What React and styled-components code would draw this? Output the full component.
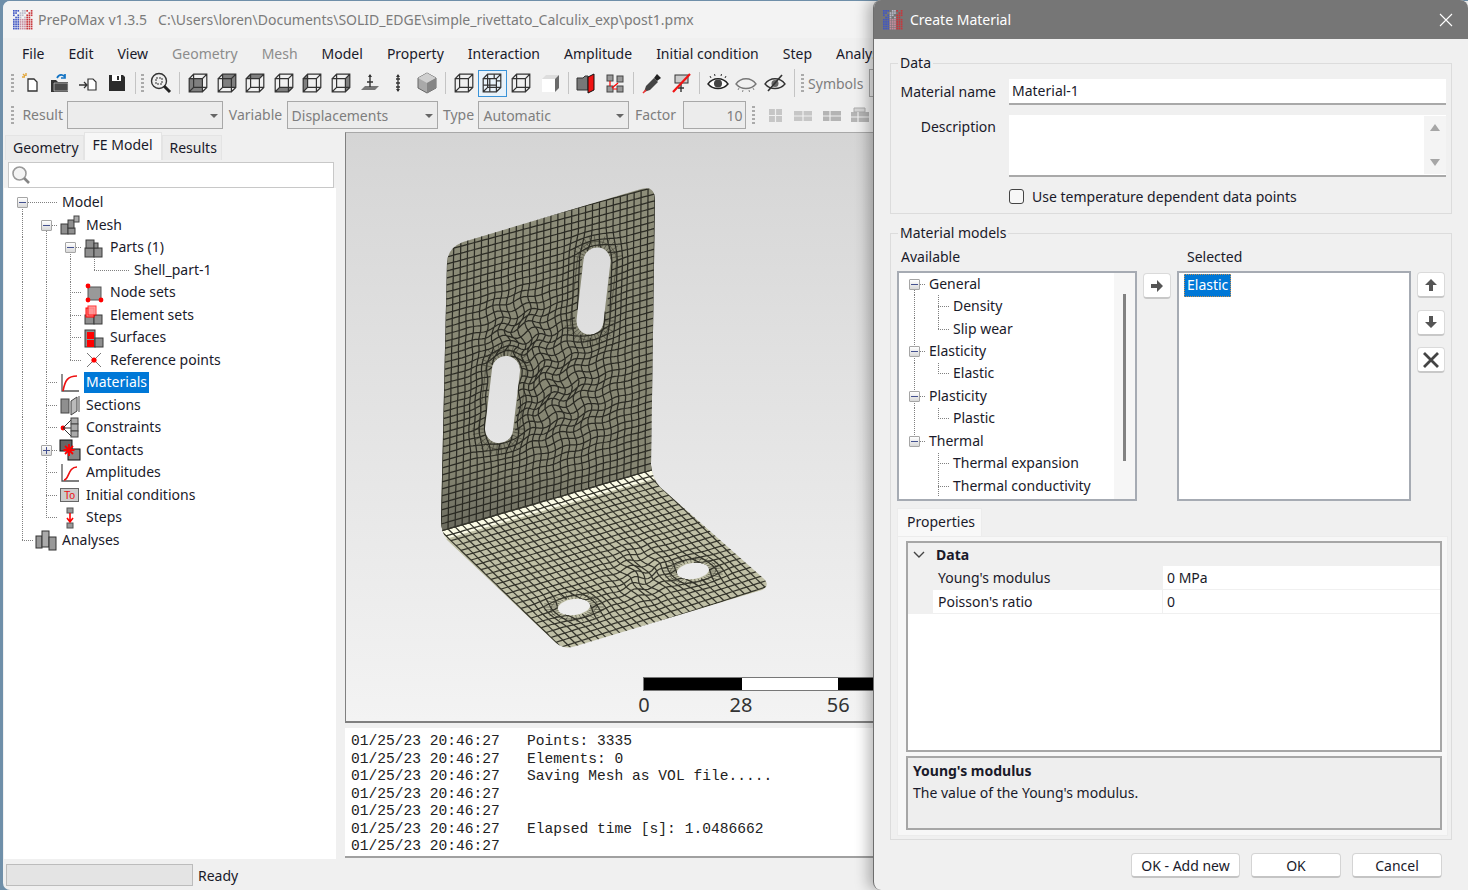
import React from "react";
import styled, { createGlobalStyle } from "styled-components";

const UI_FONT = `"Noto Sans", "Open Sans", sans-serif`;

const GlobalStyle = createGlobalStyle`
  html, body {
    margin: 0;
    padding: 0;
    width: 1468px;
    height: 890px;
    overflow: hidden;
    background: #6f8fa9;
  }
  * { box-sizing: border-box; }
  #root { width: 1468px; height: 890px; }
`;

/* ---------- mesh drawing ---------- */

const HOLES = [
  { a: [597, 261], b: [590, 321], r: 13.5, sy: 1, R: 2.6 },
  { a: [506, 370], b: [499, 429], r: 14, sy: 1, R: 2.6 },
  { a: [574, 607], b: [574, 607], r: 16, sy: 2, R: 2.6 },
  { a: [693, 571], b: [693, 571], r: 16, sy: 2, R: 2.6 },
];

const pushOut = (x, y, h) => {
  const ax = h.a[0], ay = h.a[1], bx = h.b[0], by = h.b[1];
  const dx = bx - ax, dy = by - ay;
  const len = dx * dx + dy * dy;
  const t = len ? Math.max(0, Math.min(1, ((x - ax) * dx + (y - ay) * dy) / len)) : 0;
  const qx = ax + t * dx, qy = ay + t * dy;
  const vx = x - qx, vy = (y - qy) * h.sy;
  const d = Math.hypot(vx, vy) / h.r;
  if (d >= h.R) return [x, y];
  if (d < 0.5) return null;
  const nd = 1 + ((h.R - 1) * (d - 0.5)) / (h.R - 0.5);
  const s = nd / d;
  return [qx + vx * s, qy + (vy * s) / h.sy];
};

const warp = (x, y) => {
  const w1 = Math.exp(-((x - 555) ** 2 + (y - 395) ** 2) / 3200);
  const w2 = Math.exp(-((x - 640) ** 2 + (y - 575) ** 2) / 700);
  const w3 = Math.exp(-((x - 520) ** 2 + (y - 330) ** 2) / 1200);
  const w = w1 + w2 + w3;
  let p = [x + w * 3.4 * Math.sin(y * 0.21 + x * 0.07), y + w * 3.4 * Math.cos(x * 0.19 - y * 0.05)];
  for (const h of HOLES) {
    p = pushOut(p[0], p[1], h);
    if (!p) return null;
  }
  return p;
};

const onQuad = (q, u, v) => {
  const tx = q[0][0] + (q[1][0] - q[0][0]) * u;
  const ty = q[0][1] + (q[1][1] - q[0][1]) * u;
  const bx = q[3][0] + (q[2][0] - q[3][0]) * u;
  const by = q[3][1] + (q[2][1] - q[3][1]) * u;
  return [tx + (bx - tx) * v, ty + (by - ty) * v];
};

const gridPath = (q, cols, rows) => {
  let d = "";
  const line = (fn) => {
    let pen = false;
    for (let i = 0; i <= 60; i++) {
      const [x, y] = fn(i / 60);
      const p = warp(x, y);
      if (!p) {
        pen = false;
        continue;
      }
      d += `${pen ? "L" : "M"}${p[0].toFixed(1)} ${p[1].toFixed(1)}`;
      pen = true;
    }
  };
  for (let c = 0; c <= cols; c++) line((t) => onQuad(q, c / cols, t));
  for (let r = 0; r <= rows; r++) line((t) => onQuad(q, t, r / rows));
  return d;
};

const capsule = (h, k = 1) => {
  const r = h.r * k;
  const dx = h.b[0] - h.a[0], dy = h.b[1] - h.a[1];
  const l = Math.hypot(dx, dy);
  const nx = (-dy / l) * r, ny = (dx / l) * r;
  return `M${h.a[0] + nx} ${h.a[1] + ny}A${r} ${r} 0 0 1 ${h.a[0] - nx} ${h.a[1] - ny}L${h.b[0] - nx} ${h.b[1] - ny}A${r} ${r} 0 0 1 ${h.b[0] + nx} ${h.b[1] + ny}Z`;
};

const ellipse = (h, k = 1) => {
  const [cx, cy] = h.a;
  const rx = 16 * k, ry = 8 * k;
  return `M${cx - rx} ${cy + rx / 8}A${rx} ${ry} -8 1 1 ${cx + rx} ${cy - rx / 8}A${rx} ${ry} -8 1 1 ${cx - rx} ${cy + rx / 8}Z`;
};

const holeShape = (h, k) => (h.sy > 1 ? ellipse(h, k) : capsule(h, k));

const spokes = (h) => {
  let d = "";
  for (let i = 0; i < 30; i++) {
    const th = (i / 30) * Math.PI * 2;
    const q = Math.sin(th) < 0 ? h.a : h.b;
    const c = Math.cos(th) * h.r, s = (Math.sin(th) * h.r) / h.sy;
    d += `M${(q[0] + c).toFixed(1)} ${(q[1] + s).toFixed(1)}L${(q[0] + c * 1.9).toFixed(1)} ${(q[1] + s * 1.9).toFixed(1)}`;
  }
  return d;
};

const OUTLINE =
  "M447 262Q448 248 463 242L641 189Q655 185 655 200L651 465Q652 478 660 487L763 578Q771 585 762 590L576 646Q565 650 556 643L447 540Q441 532 441 520Z";
const PLATE = OUTLINE + HOLES.map((h) => holeShape(h, 1)).join("");
const UPPER = [[447, 243], [655, 187], [652, 470], [441, 531]];
const LOWER = [[441, 531], [652, 470], [772, 585], [566, 652]];
const UPPER_GRID = gridPath(UPPER, 30, 41);
const LOWER_GRID = gridPath(LOWER, 30, 25);
const RINGS = HOLES.map((h) => holeShape(h, 1.45) + spokes(h)).join("");

const MeshDrawing = () => (
  <MeshSvg viewBox="346 133 1122 588" width="1122" height="588">
    <defs>
      <clipPath id="plate">
        <path d={PLATE} clipRule="evenodd" />
      </clipPath>
      <linearGradient id="upperFill" x1="0" y1="0" x2="0" y2="1">
        <stop offset="0" stopColor="#8e8e7a" />
        <stop offset="0.82" stopColor="#858572" />
        <stop offset="1" stopColor="#6a6a5e" />
      </linearGradient>
    </defs>
    <g clipPath="url(#plate)">
      <rect x="430" y="460" width="350" height="200" fill="#c0c0a6" />
      <polygon points="430,240 670,170 670,465 651,470 441,531 430,534" fill="url(#upperFill)" />
      <line x1="436" y1="537" x2="662" y2="472" stroke="#fbfbe6" strokeWidth="9" />
      <path d={UPPER_GRID} fill="none" stroke="#2b2b24" strokeWidth="1.25" />
      <path d={LOWER_GRID} fill="none" stroke="#35352c" strokeWidth="1.25" />
      <path d={RINGS} fill="none" stroke="#2f2f27" strokeWidth="0.7" opacity="0.75" />
    </g>
  </MeshSvg>
);

/* ---------- icons ---------- */

const PixelLogo = () => {
  const cells = [];
  for (let r = 0; r < 9; r++) {
    for (let c = 0; c < 9; c++) {
      if ((r + c) % 4 === 3 && r < 4) continue;
      const hue = c < 3 ? "#3f56c4" : c < 6 ? (r < 4 ? "#b9b9c9" : "#c88ea0") : "#c8363c";
      cells.push(<rect key={`${r}-${c}`} x={c * 2} y={r * 2} width="1.5" height="1.5" fill={hue} />);
    }
  }
  return (
    <svg width="20" height="20" viewBox="0 0 18 18">
      {cells}
    </svg>
  );
};

const Ic = ({ s = 22, children }) => (
  <svg width={s} height={s} viewBox="0 0 22 22">
    {children}
  </svg>
);
const tile = { fill: "#8f8f8f", stroke: "#3a3a3a", strokeWidth: 1 };

const TREE_ICONS = {
  mesh: (
    <Ic>
      <rect x="2" y="10" width="7" height="10" {...tile} />
      <rect x="9" y="14" width="7" height="6" {...tile} />
      <rect x="9" y="6" width="6" height="8" {...tile} />
      <rect x="15" y="2" width="5" height="6" fill="#aaa" stroke="#444" />
    </Ic>
  ),
  parts: (
    <Ic>
      <rect x="2" y="11" width="9" height="9" {...tile} />
      <rect x="11" y="11" width="8" height="9" {...tile} />
      <rect x="3" y="3" width="8" height="8" {...tile} />
      <rect x="11" y="6" width="4" height="5" {...tile} />
    </Ic>
  ),
  nodes: (
    <Ic>
      <rect x="5" y="5" width="13" height="13" fill="#999" stroke="#555" />
      <circle cx="5" cy="4" r="2.4" fill="#f00" />
      <circle cx="5" cy="18" r="2.4" fill="#f00" />
      <circle cx="18" cy="18" r="2.4" fill="#f00" />
    </Ic>
  ),
  elements: (
    <Ic>
      <rect x="2" y="11" width="9" height="9" {...tile} />
      <rect x="11" y="11" width="8" height="9" {...tile} />
      <rect x="3" y="4" width="8" height="9" fill="#f88" stroke="#f00" />
      <rect x="5" y="2" width="8" height="9" fill="#ff9a9a" stroke="#f00" opacity="0.8" />
    </Ic>
  ),
  surfaces: (
    <Ic>
      <rect x="2" y="3" width="10" height="17" {...tile} />
      <rect x="12" y="11" width="8" height="9" {...tile} />
      <rect x="4" y="5" width="7" height="7" fill="#f00" />
      <rect x="4" y="13" width="7" height="7" fill="#f00" />
    </Ic>
  ),
  refs: (
    <Ic>
      <path d="M4 4L18 18M18 4L4 18" stroke="#777" strokeWidth="1" />
      <circle cx="11" cy="11" r="2.6" fill="#f00" />
    </Ic>
  ),
  materials: (
    <Ic>
      <path d="M3 2V19H20" fill="none" stroke="#555" strokeWidth="1.3" />
      <path d="M4 19C6 8 9 4 18 4" fill="none" stroke="#e11" strokeWidth="1.6" />
    </Ic>
  ),
  sections: (
    <Ic>
      <rect x="2" y="5" width="8" height="14" fill="#8f8f8f" stroke="#444" />
      <path d="M12 7L18 3V17L12 21Z" fill="#bbb" stroke="#444" />
      <path d="M20 2V18" stroke="#444" />
    </Ic>
  ),
  constraints: (
    <Ic>
      <circle cx="4" cy="11" r="2.4" fill="#f00" />
      <path d="M4 11L12 3M4 11H12M4 11L12 19" stroke="#333" />
      <rect x="12" y="1" width="7" height="6" fill="#aaa" stroke="#444" />
      <rect x="12" y="7" width="7" height="7" fill="#aaa" stroke="#444" />
      <rect x="12" y="14" width="7" height="6" fill="#aaa" stroke="#444" />
    </Ic>
  ),
  contacts: (
    <Ic>
      <rect x="1" y="1" width="12" height="11" fill="#666" stroke="#111" />
      <rect x="9" y="10" width="12" height="11" fill="#888" stroke="#111" />
      <path d="M10 5V17M4.5 11H15.5M6 7L14 15M14 7L6 15" stroke="#f00" strokeWidth="1.8" />
    </Ic>
  ),
  amplitudes: (
    <Ic>
      <path d="M3 2V19H20" fill="none" stroke="#555" strokeWidth="1.3" />
      <path d="M5 18C10 18 9 5 18 5" fill="none" stroke="#e11" strokeWidth="1.6" />
    </Ic>
  ),
  initial: (
    <Ic>
      <rect x="1.5" y="4.5" width="18" height="13" fill="#ccc" stroke="#666" />
      <text x="10.5" y="15" fontFamily="Liberation Sans, sans-serif" fontSize="10.5" fill="#e11" textAnchor="middle">
        To
      </text>
    </Ic>
  ),
  steps: (
    <Ic>
      <rect x="8" y="1" width="6" height="5" fill="#999" stroke="#555" />
      <rect x="8" y="16" width="6" height="5" fill="#999" stroke="#555" />
      <path d="M11 6V15M8 11L11 15L14 11" fill="none" stroke="#f00" strokeWidth="1.6" />
    </Ic>
  ),
  analyses: (
    <Ic>
      <rect x="1" y="7" width="6" height="12" fill="#999" stroke="#333" />
      <rect x="7" y="2" width="7" height="16" fill="#aaa" stroke="#333" />
      <rect x="14" y="8" width="7" height="13" fill="#999" stroke="#333" />
    </Ic>
  ),
};

const FACES = {
  front: "M2 6H14V18H2Z",
  back: "M6 2H18V14H6Z",
  top: "M2 6L6 2H18L14 6Z",
  bottom: "M2 18L6 14H18L14 18Z",
  left: "M2 6L6 2V14L2 18Z",
  right: "M14 6L18 2V14L14 18Z",
};

const Cube = ({ face, grid }) => (
  <svg width="22" height="22" viewBox="0 0 20 20">
    {face && <path d={FACES[face]} fill="#7f7f7f" />}
    <path
      d="M2 6H14V18H2ZM2 6L6 2H18V14L14 18M14 6L18 2M6 2V14H18M6 14L2 18"
      fill="none"
      stroke="#333"
      strokeWidth="1.1"
    />
    {grid && <path d="M8 6V18M2 12H14M12 2V6M18 8H14" fill="none" stroke="#333" strokeWidth="1.1" />}
  </svg>
);

const ToolSvg = ({ children }) => (
  <svg width="22" height="22" viewBox="0 0 22 22">
    {children}
  </svg>
);

const TOOL_ICONS = {
  new: (
    <ToolSvg>
      <path d="M8 7H14L17 10V19H8Z" fill="#fff" stroke="#333" strokeWidth="1.3" />
      <path d="M2 5H5M6 1V4M3 2L5 4" stroke="#e2a63a" strokeWidth="1.4" />
    </ToolSvg>
  ),
  open: (
    <ToolSvg>
      <path d="M2 8H7L9 10H19V20H2Z" fill="#333" />
      <path d="M5 11H19V19H5Z" fill="#4a4a4a" stroke="#ddd" strokeWidth="0.6" />
      <path d="M8 6C10 2 14 2 16 5M16 2V6H12" fill="none" stroke="#1474c4" strokeWidth="1.7" />
    </ToolSvg>
  ),
  import: (
    <ToolSvg>
      <path d="M11 7H16L19 10V18H11Z" fill="#fff" stroke="#333" strokeWidth="1.2" />
      <path d="M2 13H10M7 10L10 13L7 16" fill="none" stroke="#333" strokeWidth="1.3" />
    </ToolSvg>
  ),
  save: (
    <ToolSvg>
      <path d="M3 3H17L19 5V19H3Z" fill="#2b2b2b" />
      <rect x="6" y="3" width="9" height="6" fill="#fff" />
      <rect x="11" y="4" width="2" height="4" fill="#2b2b2b" />
    </ToolSvg>
  ),
  zoom: (
    <ToolSvg>
      <circle cx="9" cy="9" r="7.5" fill="#eee" stroke="#333" strokeWidth="1.4" />
      <path d="M14 14L20 20" stroke="#222" strokeWidth="3" />
      <rect x="6" y="6" width="6" height="6" fill="none" stroke="#333" strokeDasharray="2 1" />
    </ToolSvg>
  ),
  plane: (
    <ToolSvg>
      <path d="M2 18L6 14H20L16 18Z" fill="#777" />
      <path d="M11 3V15M8 10H14" stroke="#333" strokeWidth="1.4" />
      <path d="M9 5L11 2L13 5Z" fill="#333" />
    </ToolSvg>
  ),
  axis: (
    <ToolSvg>
      <path d="M11 3V19M9 7H13M9 11H13M9 15H13" stroke="#333" strokeWidth="1.3" />
      <path d="M9 5L11 2L13 5ZM9 17L11 20L13 17Z" fill="#333" />
    </ToolSvg>
  ),
  iso: (
    <ToolSvg>
      <path d="M11 1L20 6V16L11 21L2 16V6Z" fill="#a9a9a9" stroke="#666" />
      <path d="M11 11L20 6L11 1L2 6Z" fill="#cfcfcf" />
      <path d="M11 11V21L20 16V6Z" fill="#858585" />
    </ToolSvg>
  ),
  solid: (
    <ToolSvg>
      <path d="M3 7L7 3H20L16 7Z" fill="#ddd" />
      <path d="M16 7L20 3V16L16 20Z" fill="#6b6b6b" />
      <rect x="3" y="7" width="13" height="13" fill="#fff" />
    </ToolSvg>
  ),
  section: (
    <ToolSvg>
      <path d="M2 6H8L10 4H13V18H2Z" fill="#777" stroke="#333" />
      <path d="M13 5L19 2V18L13 21Z" fill="#f01414" stroke="#111" />
    </ToolSvg>
  ),
  nodes: (
    <ToolSvg>
      <rect x="3" y="3" width="6" height="6" fill="#999" stroke="#444" />
      <rect x="13" y="4" width="6" height="6" fill="#999" stroke="#444" />
      <rect x="3" y="14" width="6" height="6" fill="#999" stroke="#444" />
      <rect x="13" y="14" width="6" height="6" fill="#999" stroke="#444" />
      <path d="M6 9V14M14 11L8 16M9 17H13" stroke="#f00" strokeWidth="1.2" />
    </ToolSvg>
  ),
  picker: (
    <ToolSvg>
      <path d="M3 20L5 14L13 6L17 10L9 18Z" fill="#444" />
      <path d="M13 6L16 2L20 6L16 9Z" fill="#222" />
      <path d="M2 21L5 18" stroke="#e33" strokeWidth="1.6" />
    </ToolSvg>
  ),
  clear: (
    <ToolSvg>
      <rect x="5" y="3" width="13" height="8" fill="#ccc" stroke="#333" />
      <path d="M11 11V20M8 16H14" stroke="#333" strokeWidth="1.4" />
      <path d="M3 20L20 2" stroke="#f01414" strokeWidth="2.2" />
    </ToolSvg>
  ),
  eye: (
    <ToolSvg>
      <path d="M1 12C6 5 16 5 21 12C16 18 6 18 1 12Z" fill="#fff" stroke="#222" strokeWidth="1.4" />
      <circle cx="11" cy="11.5" r="4" fill="#444" />
      <path d="M4 6L3 4M8 4L7.5 2M14 4L14.5 2M18 6L19 4" stroke="#333" />
    </ToolSvg>
  ),
  eyeOpen: (
    <ToolSvg>
      <path d="M1 12C6 5 16 5 21 12C16 18 6 18 1 12Z" fill="none" stroke="#777" strokeWidth="1.3" />
      <path d="M4 16L3 18M8 18L7.5 20M14 18L14.5 20M18 16L19 18" stroke="#888" />
    </ToolSvg>
  ),
  eyeHide: (
    <ToolSvg>
      <path d="M1 12C6 5 16 5 21 12C16 18 6 18 1 12Z" fill="none" stroke="#333" strokeWidth="1.3" />
      <circle cx="11" cy="11.5" r="3.5" fill="#666" />
      <path d="M4 19L18 3" stroke="#333" strokeWidth="1.6" />
    </ToolSvg>
  ),
  gridA: (
    <ToolSvg>
      <path d="M5 5H18V18H5Z" fill="#c6c6c6" />
      <path d="M11.5 5V18M5 11.5H18" stroke="#f0f0f0" strokeWidth="1.2" />
    </ToolSvg>
  ),
  gridB: (
    <ToolSvg>
      <path d="M2 7H20V17H2Z" fill="#c6c6c6" />
      <path d="M11 7V17M2 12H20" stroke="#f0f0f0" strokeWidth="1.2" />
    </ToolSvg>
  ),
  gridC: (
    <ToolSvg>
      <path d="M2 7H20V17H2Z" fill="#b4b4b4" />
      <path d="M9 7V17M2 12H20" stroke="#f0f0f0" strokeWidth="1.2" />
    </ToolSvg>
  ),
  gridD: (
    <ToolSvg>
      <path d="M2 8H20V18H2Z" fill="#b4b4b4" />
      <path d="M5 4H16V8H5Z" fill="#d4d4d4" stroke="#aaa" />
      <path d="M9 8V18M2 13H20" stroke="#f0f0f0" strokeWidth="1.2" />
    </ToolSvg>
  ),
};

/* ---------- data ---------- */

const MENU = [
  ["File"], ["Edit"], ["View"], ["Geometry", true], ["Mesh", true], ["Model"], ["Property"],
  ["Interaction"], ["Amplitude"], ["Initial condition"], ["Step"], ["Analysis"],
];

const MODEL_TREE = [
  { label: "Model", level: 0, own: "down", toggle: "minus", guides: [] },
  { label: "Mesh", level: 1, own: "down", toggle: "minus", icon: "mesh", guides: [1] },
  { label: "Parts (1)", level: 2, own: "down", toggle: "minus", icon: "parts", guides: [1, 1] },
  { label: "Shell_part-1", level: 3, own: "up", guides: [1, 1, 1] },
  { label: "Node sets", level: 2, own: "full", icon: "nodes", guides: [1, 1] },
  { label: "Element sets", level: 2, own: "full", icon: "elements", guides: [1, 1] },
  { label: "Surfaces", level: 2, own: "full", icon: "surfaces", guides: [1, 1] },
  { label: "Reference points", level: 2, own: "up", icon: "refs", guides: [1, 1] },
  { label: "Materials", level: 1, own: "full", icon: "materials", guides: [1], selected: true },
  { label: "Sections", level: 1, own: "full", icon: "sections", guides: [1] },
  { label: "Constraints", level: 1, own: "full", icon: "constraints", guides: [1] },
  { label: "Contacts", level: 1, own: "full", toggle: "plus", icon: "contacts", guides: [1] },
  { label: "Amplitudes", level: 1, own: "full", icon: "amplitudes", guides: [1] },
  { label: "Initial conditions", level: 1, own: "full", icon: "initial", guides: [1] },
  { label: "Steps", level: 1, own: "up", icon: "steps", guides: [1] },
  { label: "Analyses", level: 0, own: "up", icon: "analyses", guides: [] },
];

const MATERIAL_TREE = [
  { label: "General", level: 0, own: "down", toggle: "minus", guides: [] },
  { label: "Density", level: 1, own: "full", guides: [1] },
  { label: "Slip wear", level: 1, own: "up", guides: [1] },
  { label: "Elasticity", level: 0, own: "full", toggle: "minus", guides: [] },
  { label: "Elastic", level: 1, own: "up", guides: [1] },
  { label: "Plasticity", level: 0, own: "full", toggle: "minus", guides: [] },
  { label: "Plastic", level: 1, own: "up", guides: [1] },
  { label: "Thermal", level: 0, own: "up", toggle: "minus", guides: [] },
  { label: "Thermal expansion", level: 1, own: "full", guides: [0] },
  { label: "Thermal conductivity", level: 1, own: "full", guides: [0] },
];

const TOOLBAR = [
  "new", "open", "import", "save", "|g", "zoom", "|",
  "c:front", "c:back", "c:top", "c:bottom", "c:left", "c:right", "plane", "axis", "iso", "|",
  "wire", "wireActive", "hidden", "solid", "|", "section", "nodes", "|", "picker", "clear", "|", "eye", "eyeOpen", "eyeHide",
];

const LOG = [
  "Points: 3335", "Elements: 0", "Saving Mesh as VOL file.....", "", "", "Elapsed time [s]: 1.0486662", "",
];

/* ---------- small parts ---------- */

const TreeRows = ({ rows, iconSlot, rowHeight, labelPad }) =>
  rows.map((row) => (
    <TreeRow key={row.label} $h={rowHeight}>
      {row.guides.map((on, i) => (
        <GuideCell key={i} $line={on ? "full" : "none"} />
      ))}
      <GuideCell $line={row.own} $branch>
        {row.toggle && <Toggle $plus={row.toggle === "plus"} />}
      </GuideCell>
      {iconSlot && <IconSlot $empty={!row.icon}>{row.icon && TREE_ICONS[row.icon]}</IconSlot>}
      <TreeLabel $selected={row.selected} $pad={labelPad}>
        {row.label}
      </TreeLabel>
    </TreeRow>
  ));

const Tool = ({ id }) => {
  if (id === "|") return <ToolSep />;
  if (id === "|g")
    return (
      <>
        <ToolSep />
        <Gripper />
      </>
    );
  if (id.startsWith("c:"))
    return (
      <ToolButton>
        <Cube face={id.slice(2)} />
      </ToolButton>
    );
  if (id === "wire" || id === "wireActive" || id === "hidden")
    return (
      <ToolButton $active={id === "wireActive"}>
        <Cube grid={id === "wireActive"} />
      </ToolButton>
    );
  return <ToolButton>{TOOL_ICONS[id]}</ToolButton>;
};

const App = () => (
  <>
    <GlobalStyle />
    <Desktop>
      <Window>
        <TitleBar>
          <PixelLogo />
          <TitleText>PrePoMax v1.3.5</TitleText>
          <TitleText>C:\Users\loren\Documents\SOLID_EDGE\simple_rivettato_Calculix_exp\post1.pmx</TitleText>
        </TitleBar>
        <MenuBar>
          {MENU.map(([name, off]) => (
            <MenuItem key={name} $off={off}>
              {name}
            </MenuItem>
          ))}
        </MenuBar>
        <Toolbar>
          <Gripper />
          {TOOLBAR.map((id, i) => (
            <Tool key={i} id={id} />
          ))}
          <ToolDivider />
          <Gripper />
          <ToolLabel>Symbols</ToolLabel>
          <SymbolsCombo $w={120} />
        </Toolbar>
        <ResultBar>
          <Gripper />
          <ResultLabel>Result</ResultLabel>
          <Combo $w={156} />
          <ResultLabel>Variable</ResultLabel>
          <Combo $w={151}>Displacements</Combo>
          <ResultLabel>Type</ResultLabel>
          <Combo $w={151}>Automatic</Combo>
          <ResultLabel>Factor</ResultLabel>
          <FactorInput>10</FactorInput>
          <Gripper />
          <LayoutIcons>
            <ToolButton>{TOOL_ICONS.gridA}</ToolButton>
            <ToolButton>{TOOL_ICONS.gridB}</ToolButton>
            <ToolButton>{TOOL_ICONS.gridC}</ToolButton>
            <ToolButton>{TOOL_ICONS.gridD}</ToolButton>
          </LayoutIcons>
        </ResultBar>
        <Workspace>
          <LeftPanel>
            <TabRow>
              <SideTab>Geometry</SideTab>
              <SideTab $active>FE Model</SideTab>
              <SideTab>Results</SideTab>
            </TabRow>
            <SearchBox>
              <svg width="20" height="20" viewBox="0 0 20 20">
                <circle cx="8.5" cy="8.5" r="6.5" fill="#f4f4f4" stroke="#9a9a9a" strokeWidth="1.6" />
                <path d="M13 13L18 18" stroke="#858585" strokeWidth="2.6" />
              </svg>
            </SearchBox>
            <ModelTree>
              <TreeRows rows={MODEL_TREE} iconSlot rowHeight={22.53} labelPad={2} />
            </ModelTree>
          </LeftPanel>
          <RightPanel>
            <Viewport>
              <MeshDrawing />
              <ScaleBar>
                <ScaleTrack>
                  <ScaleSegment $w={98} $black />
                  <ScaleSegment $w={96} />
                  <ScaleSegment $w={98} $black />
                </ScaleTrack>
                <ScaleLabels>
                  <ScaleLabel>0</ScaleLabel>
                  <ScaleLabel>28</ScaleLabel>
                  <ScaleLabel>56</ScaleLabel>
                </ScaleLabels>
              </ScaleBar>
            </Viewport>
            <LogPanel>
              {LOG.map((msg, i) => (
                <LogLine key={i}>
                  <LogTime>01/25/23 20:46:27</LogTime>
                  <span>{msg}</span>
                </LogLine>
              ))}
            </LogPanel>
          </RightPanel>
        </Workspace>
        <StatusBar>
          <ProgressBox />
          <StatusText>Ready</StatusText>
        </StatusBar>
      </Window>

      <Dialog>
        <DialogHeader>
          <PixelLogo />
          <DialogTitle>Create Material</DialogTitle>
          <CloseIcon width="14" height="14" viewBox="0 0 14 14">
            <path d="M1 1L13 13M13 1L1 13" stroke="#fff" strokeWidth="1.1" />
          </CloseIcon>
        </DialogHeader>
        <DialogBody>
          <Group>
            <Legend $inset={-2}>Data</Legend>
            <FormGrid>
              <FieldLabel>Material name</FieldLabel>
              <TextField>Material-1</TextField>
              <FieldLabel $top>Description</FieldLabel>
              <TextArea>
                <AreaScroll>
                  <ScrollArrow />
                  <ScrollArrow $down />
                </AreaScroll>
              </TextArea>
              <span />
              <CheckRow>
                <CheckBox />
                Use temperature dependent data points
              </CheckRow>
            </FormGrid>
          </Group>
          <ModelsGroup>
            <Legend $inset={1}>Material models</Legend>
            <ListsRow>
              <AvailableColumn>
                <ColumnTitle>Available</ColumnTitle>
                <ListBox>
                  <ListTree>
                    <TreeRows rows={MATERIAL_TREE} rowHeight={22.45} labelPad={1} />
                  </ListTree>
                  <ListScroll>
                    <ListThumb />
                  </ListScroll>
                </ListBox>
              </AvailableColumn>
              <MoveColumn>
                <IconButton>
                  <svg width="14" height="14" viewBox="0 0 14 14">
                    <path d="M1 5H7V1L13 7L7 13V9H1Z" fill="#555" />
                  </svg>
                </IconButton>
              </MoveColumn>
              <SelectedColumn>
                <ColumnTitle $selected>Selected</ColumnTitle>
                <ListBox>
                  <SelectedItem>Elastic</SelectedItem>
                </ListBox>
              </SelectedColumn>
              <OrderColumn>
                <IconButton>
                  <svg width="14" height="14" viewBox="0 0 14 14">
                    <path d="M5 13V7H1L7 1L13 7H9V13Z" fill="#555" />
                  </svg>
                </IconButton>
                <IconButton>
                  <svg width="14" height="14" viewBox="0 0 14 14">
                    <path d="M5 1V7H1L7 13L13 7H9V1Z" fill="#555" />
                  </svg>
                </IconButton>
                <IconButton>
                  <svg width="18" height="18" viewBox="0 0 18 18">
                    <path d="M2 2L16 16M16 2L2 16" stroke="#444" strokeWidth="2.8" />
                  </svg>
                </IconButton>
              </OrderColumn>
            </ListsRow>
            <PropertiesTab>Properties</PropertiesTab>
            <PropertiesPanel>
              <PropertyGrid>
                <CategoryRow>
                  <svg width="12" height="8" viewBox="0 0 12 8">
                    <path d="M1 1L6 6L11 1" fill="none" stroke="#444" strokeWidth="1.4" />
                  </svg>
                  <CategoryName>Data</CategoryName>
                </CategoryRow>
                <PropertyRow $active>
                  <PropertyName>Young's modulus</PropertyName>
                  <PropertyValue>0 MPa</PropertyValue>
                </PropertyRow>
                <PropertyRow>
                  <PropertyName>Poisson's ratio</PropertyName>
                  <PropertyValue>0</PropertyValue>
                </PropertyRow>
              </PropertyGrid>
              <HelpBox>
                <HelpTitle>Young's modulus</HelpTitle>
                <div>The value of the Young's modulus.</div>
              </HelpBox>
            </PropertiesPanel>
          </ModelsGroup>
          <DialogFooter>
            <FooterButton $w={109}>OK - Add new</FooterButton>
            <FooterButton $w={90}>OK</FooterButton>
            <FooterButton $w={90}>Cancel</FooterButton>
          </DialogFooter>
        </DialogBody>
      </Dialog>
    </Desktop>
  </>
);

/* ---------- main window ---------- */

const Desktop = styled.div`
  position: relative;
  width: 1468px;
  height: 890px;
  overflow: hidden;
  padding: 1px 0 0 3px;
  font-family: ${UI_FONT};
  font-size: 14px;
  color: #1a1a2a;
`;

const Window = styled.div`
  width: 1465px;
  height: 889px;
  display: flex;
  flex-direction: column;
  background: #f0f0f0;
  border-radius: 7px 0 0 7px;
  overflow: hidden;
`;

const TitleBar = styled.div`
  height: 37px;
  display: flex;
  align-items: center;
  padding-left: 10px;
  background: #f3f3f3;
  gap: 11px;
  flex: none;
  svg { margin-right: -6px; }
`;

const TitleText = styled.span`
  color: #7b7b7b;
  font-size: 14px;
`;

const MenuBar = styled.div`
  height: 30px;
  display: flex;
  align-items: center;
  gap: 24px;
  padding-left: 19px;
  flex: none;
`;

const MenuItem = styled.span`
  color: ${(p) => (p.$off ? "#8c8c8c" : "#1a1a2a")};
  white-space: nowrap;
`;

const Toolbar = styled.div`
  height: 30px;
  display: flex;
  align-items: center;
  padding-left: 7px;
  flex: none;
  white-space: nowrap;
`;

const ResultBar = styled(Toolbar)`
  height: 32px;
  gap: 4.4px;
  padding-top: 2px;
`;

const Gripper = styled.span`
  width: 3px;
  height: 18px;
  margin: 0 3px 0 1px;
  flex: none;
  background: repeating-linear-gradient(to bottom, #aaa 0 2px, transparent 2px 4px);
`;

const ToolButton = styled.span`
  width: 28.6px;
  height: 27px;
  flex: none;
  display: flex;
  align-items: center;
  justify-content: center;
  border: 1px solid ${(p) => (p.$active ? "#3a93d8" : "transparent")};
  background: ${(p) => (p.$active ? "#e8f2fa" : "transparent")};
`;

const ToolSep = styled.span`
  width: 1px;
  height: 22px;
  background: #c4c4c4;
  margin: 0 3.7px;
  flex: none;
`;

const ToolDivider = styled(ToolSep)`
  height: 28px;
  margin: 0 5px 0 5px;
`;

const ToolLabel = styled.span`
  color: #7e7e7e;
  margin-left: 1px;
`;

const ResultLabel = styled(ToolLabel)`
  margin-bottom: 2px;
`;

const Combo = styled.div`
  width: ${(p) => p.$w}px;
  height: 28px;
  flex: none;
  display: flex;
  align-items: center;
  padding: 0 4px;
  color: #7e7e7e;
  background: #ececec;
  border: 1px solid #a8a8a8;
  position: relative;
  &::after {
    content: "";
    position: absolute;
    right: 4px;
    top: 12px;
    border: 4px solid transparent;
    border-top-color: #666;
  }
`;

const SymbolsCombo = styled(Combo)`
  margin-left: 6px;
`;

const FactorInput = styled(Combo)`
  width: 63px;
  margin-left: 3px;
  justify-content: flex-end;
  padding-right: 3px;
  &::after { display: none; }
`;

const LayoutIcons = styled.div`
  display: flex;
  margin-left: -2px;
`;

const Workspace = styled.div`
  flex: 1;
  min-height: 0;
  display: flex;
`;

const LeftPanel = styled.div`
  width: 337px;
  flex: none;
  display: flex;
  flex-direction: column;
  padding: 0 4px 0 1px;
`;

const TabRow = styled.div`
  height: 30px;
  display: flex;
  align-items: flex-end;
  padding-left: 1px;
`;

const SideTab = styled.div`
  height: ${(p) => (p.$active ? 28 : 25)}px;
  padding: ${(p) => (p.$active ? "0 8px 5px" : "0 4px 2px 7px")};
  display: flex;
  align-items: center;
  background: ${(p) => (p.$active ? "#f7f7f7" : "#ececec")};
  border: 1px solid #e4e4e4;
  border-bottom: 0;
`;

const SearchBox = styled.div`
  height: 26px;
  margin-left: 4px;
  margin-top: 2px;
  width: 326px;
  background: #fff;
  border: 1px solid #c8c8c8;
  display: flex;
  align-items: center;
  padding-left: 2px;
  flex: none;
`;

const ModelTree = styled.div`
  flex: 1;
  background: #fff;
  padding: 3.5px 0 0 6px;
`;

const TreeRow = styled.div`
  height: ${(p) => p.$h}px;
  display: flex;
  align-items: center;
  white-space: nowrap;
`;

const DOT_V = "repeating-linear-gradient(to bottom, #808080 0 1px, transparent 1px 2px)";
const DOT_H = "repeating-linear-gradient(to right, #808080 0 1px, transparent 1px 2px)";

const guideBackground = ({ $line, $branch }) => {
  const layers = [];
  if ($line === "full") layers.push(`${DOT_V} 50% 0 / 1px 100% no-repeat`);
  if ($line === "up") layers.push(`${DOT_V} 50% 0 / 1px 50% no-repeat`);
  if ($line === "down") layers.push(`${DOT_V} 50% 100% / 1px 50% no-repeat`);
  if ($branch) layers.push(`${DOT_H} 100% 50% / 50% 1px no-repeat`);
  return layers.length ? layers.join(", ") : "none";
};

const GuideCell = styled.span`
  width: 24px;
  height: 100%;
  flex: none;
  display: flex;
  align-items: center;
  justify-content: center;
  background: ${guideBackground};
`;

const Toggle = styled.span`
  width: 11px;
  height: 11px;
  border: 1px solid #a5a5a5;
  border-radius: 1px;
  background:
    linear-gradient(#44518f, #44518f) center / 7px 1px no-repeat,
    ${(p) => (p.$plus ? "linear-gradient(#44518f, #44518f) center / 1px 7px no-repeat," : "")}
    linear-gradient(#fff, #d8d8d8);
`;

const IconSlot = styled.span`
  width: 24px;
  height: 100%;
  flex: none;
  display: flex;
  align-items: center;
  justify-content: center;
  background: ${(p) => (p.$empty ? `${DOT_H} 0 50% / 100% 1px no-repeat` : "none")};
`;

const TreeLabel = styled.span`
  margin-left: 2px;
  padding: 0 2px 0 ${(p) => p.$pad}px;
  height: 21px;
  line-height: 20px;
  color: ${(p) => (p.$selected ? "#fff" : "#1a1a2a")};
  background: ${(p) => (p.$selected ? "#0078d7" : "transparent")};
`;

const RightPanel = styled.div`
  flex: 1;
  min-width: 0;
  display: flex;
  flex-direction: column;
  padding: 2px 0 0 5px;
`;

const Viewport = styled.div`
  position: relative;
  height: 591px;
  flex: none;
  overflow: hidden;
  background: linear-gradient(#d5d5d5, #f3f3f3);
  border-left: 1px solid #808080;
  border-top: 1px solid #a8a8a8;
  border-bottom: 2px solid #808080;
`;

const MeshSvg = styled.svg`
  display: block;
`;

const ScaleBar = styled.div`
  position: absolute;
  left: 297px;
  top: 544px;
`;

const ScaleTrack = styled.div`
  display: flex;
  height: 14px;
  border: 1px solid #777;
`;

const ScaleSegment = styled.span`
  width: ${(p) => p.$w}px;
  background: ${(p) => (p.$black ? "#000" : "#fff")};
`;

const ScaleLabels = styled.div`
  display: flex;
  margin-top: 1px;
  margin-left: -24px;
`;

const ScaleLabel = styled.span`
  width: 96.5px;
  text-align: center;
  font-size: 20px;
  line-height: 26px;
  color: #333;
  &:first-child { width: 50px; }
  &:nth-child(2) { width: 98px; margin-left: 23px; }
`;

const LogPanel = styled.div`
  margin-top: 5px;
  height: 130px;
  background: #fff;
  border-bottom: 2px solid #a0a0a0;
  padding: 5px 6px 0;
  font-family: "Liberation Mono", monospace;
  font-size: 14.6px;
  line-height: 17.55px;
  color: #222;
`;

const LogLine = styled.div`
  display: flex;
  height: 17.55px;
  white-space: pre;
`;

const LogTime = styled.span`
  width: 176px;
  flex: none;
`;

const StatusBar = styled.div`
  height: 31px;
  flex: none;
  display: flex;
  align-items: center;
  padding-left: 3px;
  gap: 5px;
`;

const ProgressBox = styled.div`
  width: 187px;
  height: 22px;
  background: #e4e4e4;
  border: 1px solid #bcbcbc;
`;

const StatusText = styled.span`
  color: #1a1a2a;
  padding-top: 2px;
`;

/* ---------- dialog ---------- */

const Dialog = styled.div`
  position: absolute;
  left: 873px;
  top: 0;
  width: 595px;
  height: 890px;
  display: flex;
  flex-direction: column;
  background: #f0f0f0;
  border-radius: 8px 8px 0 8px;
  box-shadow: -5px 0 14px rgba(0, 0, 0, 0.28);
  border-left: 1px solid #6d6d6d;
  overflow: hidden;
`;

const DialogHeader = styled.div`
  height: 39px;
  flex: none;
  display: flex;
  align-items: center;
  background: #767676;
  padding: 0 15px 0 9px;
  gap: 7px;
`;

const DialogTitle = styled.span`
  color: #fff;
  flex: 1;
`;

const CloseIcon = styled.svg`
  flex: none;
`;

const DialogBody = styled.div`
  flex: 1;
  min-height: 0;
  display: flex;
  flex-direction: column;
  padding: 15px 16px 0 16px;
`;

const Group = styled.fieldset`
  margin: 0;
  min-width: 0;
  height: 160px;
  flex: none;
  padding: 7px 5px 0 9px;
  border: 1px solid #dcdcdc;
`;

const ModelsGroup = styled(Group)`
  height: 616px;
  margin-top: 10px;
  padding: 6px 3px 0 6px;
`;

const Legend = styled.legend`
  padding: 0 2px;
  margin-left: ${(p) => p.$inset}px;
  line-height: 18px;
  color: #1a1a2a;
`;

const FormGrid = styled.div`
  display: grid;
  grid-template-columns: 96px 1fr;
  column-gap: 13px;
  row-gap: 10px;
  align-items: center;
`;

const FieldLabel = styled.label`
  text-align: right;
  white-space: nowrap;
  align-self: ${(p) => (p.$top ? "start" : "center")};
  margin-top: ${(p) => (p.$top ? "2px" : "0")};
  margin-bottom: ${(p) => (p.$top ? "0" : "2px")};
`;

const TextField = styled.div`
  height: 26px;
  background: #fff;
  border-bottom: 2px solid #a9a9a9;
  padding: 0 3px;
  line-height: 24px;
`;

const TextArea = styled.div`
  height: 62px;
  background: #fff;
  border-bottom: 2px solid #a9a9a9;
  display: flex;
  justify-content: flex-end;
`;

const AreaScroll = styled.div`
  width: 22px;
  margin: 1px 0;
  background: #f4f4f4;
  display: flex;
  flex-direction: column;
  align-items: center;
  justify-content: space-between;
  padding: 8px 0;
`;

const ScrollArrow = styled.span`
  width: 0;
  height: 0;
  border-left: 5px solid transparent;
  border-right: 5px solid transparent;
  border-bottom: ${(p) => (p.$down ? "0" : "7px solid #a6a6a6")};
  border-top: ${(p) => (p.$down ? "7px solid #a6a6a6" : "0")};
`;

const CheckRow = styled.div`
  display: flex;
  align-items: center;
  gap: 8px;
  height: 18px;
`;

const CheckBox = styled.span`
  width: 15px;
  height: 15px;
  border: 1px solid #444;
  border-radius: 3px;
  background: #f7f7f7;
`;

const ListsRow = styled.div`
  display: flex;
`;

const AvailableColumn = styled.div`
  width: 240px;
  flex: none;
`;

const SelectedColumn = styled.div`
  width: 234px;
  flex: none;
`;

const ColumnTitle = styled.div`
  height: 23px;
  line-height: 18px;
  padding-left: ${(p) => (p.$selected ? "10px" : "4px")};
`;

const ListBox = styled.div`
  height: 230px;
  display: flex;
  background: #fff;
  border: 2px solid #a6abb3;
  overflow: hidden;
  align-items: flex-start;
`;

const ListTree = styled.div`
  flex: 1;
  padding-left: 3px;
  height: 100%;
  overflow: hidden;
`;

const ListScroll = styled.div`
  width: 21px;
  height: 100%;
  background: #f6f6f6;
  padding: 21px 0 0 9px;
`;

const ListThumb = styled.div`
  width: 3px;
  height: 167px;
  background: #828282;
`;

const SelectedItem = styled.span`
  margin: 1px 0 0 5px;
  height: 23px;
  padding: 0 3px;
  line-height: 21px;
  color: #fff;
  background: #0078d7;
  outline: 1px dotted #c89050;
  outline-offset: -1px;
`;

const MoveColumn = styled.div`
  width: 40px;
  flex: none;
  padding: 25px 0 0 6px;
`;

const OrderColumn = styled.div`
  flex: none;
  padding: 24px 0 0 6px;
  display: flex;
  flex-direction: column;
  gap: 11.5px;
`;

const IconButton = styled.button`
  width: 28px;
  height: 26px;
  padding: 0;
  display: flex;
  align-items: center;
  justify-content: center;
  background: #fff;
  border: 1px solid #dadada;
  border-bottom: 2px solid #c8c8c8;
  border-radius: 4px;
`;

const PropertiesTab = styled.div`
  width: 85px;
  height: 28px;
  margin-top: 7px;
  line-height: 26px;
  padding-left: 9px;
  background: #f8f8f8;
  border: 1px solid #ececec;
  border-bottom: 0;
`;

const PropertiesPanel = styled.div`
  width: 551px;
  height: 300px;
  background: #f7f7f7;
  border: 1px solid #ececec;
  padding: 4px 5px 0 8px;
  display: flex;
  flex-direction: column;
  gap: 4px;
`;

const PropertyGrid = styled.div`
  height: 211px;
  flex: none;
  background: #fff;
  border: 2px solid #a6a6a6;
`;

const CategoryRow = styled.div`
  height: 23px;
  display: flex;
  align-items: center;
  gap: 11px;
  padding-left: 5px;
  background: #f0f0f0;
`;

const CategoryName = styled.span`
  font-weight: 700;
`;

const PropertyRow = styled.div`
  height: 24px;
  display: grid;
  grid-template-columns: 229px 1fr;
  border-bottom: 1px solid #f0f0f0;
  border-left: 25px solid #f0f0f0;
  background: ${(p) => (p.$active ? "#f0f0f0" : "#fff")};
`;

const PropertyName = styled.span`
  padding-left: 5px;
  line-height: 23px;
`;

const PropertyValue = styled.span`
  background: #fff;
  padding-left: 4px;
  line-height: 23px;
  border-left: 1px solid #f0f0f0;
`;

const HelpBox = styled.div`
  height: 74px;
  flex: none;
  background: #eeeeee;
  border: 2px solid #a6a6a6;
  padding: 2px 5px;
  line-height: 22px;
`;

const HelpTitle = styled.div`
  font-weight: 700;
`;

const DialogFooter = styled.div`
  flex: none;
  display: flex;
  justify-content: flex-end;
  gap: 11px;
  margin-top: 13px;
  padding-right: 10px;
`;

const FooterButton = styled.button`
  width: ${(p) => p.$w}px;
  height: 25px;
  padding: 0;
  font-family: ${UI_FONT};
  font-size: 14px;
  color: #1a1a2a;
  background: #fff;
  border: 1px solid #d4d4d4;
  border-bottom: 2px solid #c4c4c4;
  border-radius: 4px;
`;

export default App;
